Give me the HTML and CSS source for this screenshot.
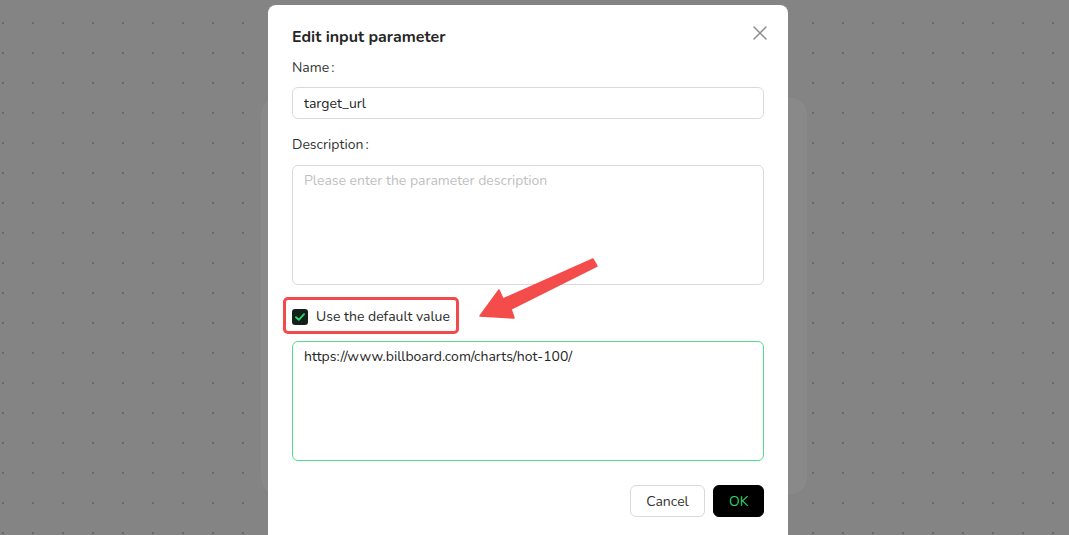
FILE: index.html
```html
<!DOCTYPE html>
<html lang="en">
<head>
<meta charset="utf-8">
<title>Edit input parameter</title>
<link rel="stylesheet" href="styles.css">
</head>
<body>
<div class="canvas">
  <div class="panel"></div>
</div>
<div class="modal">
  <div class="modal-head">
    <h2 class="title">Edit input parameter</h2>
    <button class="close" aria-label="Close">
      <svg width="14" height="14" viewBox="0 0 14 14"><path d="M1 1L13 13M13 1L1 13" stroke="#8c8c8c" stroke-width="1.5" stroke-linecap="round"/></svg>
    </button>
  </div>
  <div class="field">
    <label class="label">Name<span class="colon">:</span></label>
    <input class="input" type="text" value="target_url">
  </div>
  <div class="field">
    <label class="label">Description<span class="colon">:</span></label>
    <textarea class="textarea" placeholder="Please enter the parameter description"></textarea>
  </div>
  <div class="check-row">
    <span class="checkbox">
      <svg width="10" height="8" viewBox="0 0 10 8"><path d="M1 4.2L3.8 6.8L9 1.2" fill="none" stroke="#2bd66a" stroke-width="1.9" stroke-linecap="round" stroke-linejoin="round"/></svg>
    </span>
    <span class="check-label">Use the default value</span>
  </div>
  <textarea class="textarea textarea-active">https://www.billboard.com/charts/hot-100/</textarea>
  <div class="footer">
    <button class="btn btn-cancel">Cancel</button>
    <button class="btn btn-ok">OK</button>
  </div>
  <div class="highlight"></div>
</div>
<svg class="arrow" width="1069" height="535" viewBox="0 0 1069 535">
  <path d="M593 259 L597 266 L511 309 L514 318 L480 316 L499 290 L503 299 Z" fill="#f44b4b" stroke="#f44b4b" stroke-width="1.5" stroke-linejoin="round"/>
</svg>
</body>
</html>
```

FILE: styles.css
```css
* { box-sizing: border-box; }
html, body { margin: 0; padding: 0; }
body {
  width: 1069px;
  height: 535px;
  overflow: hidden;
  font-family: "Nunito", "Lato", "Noto Sans", sans-serif;
  background-color: #848484;
  background-image: radial-gradient(circle, #6a6a6a 0.9px, transparent 1.4px);
  background-size: 30px 30px;
  background-position: -12px 8px;
  position: relative;
}
.canvas {
  padding-top: 98px;
  padding-left: 261px;
}
.panel {
  width: 546px;
  height: 396px;
  border-radius: 16px;
  background: #898989;
}
.modal {
  position: absolute;
  left: 268px;
  top: 5px;
  width: 520px;
  height: 530px;
  overflow: hidden;
  background: #fff;
  border-radius: 8px 8px 0 0;
  padding: 20px 24px 0 24px;
  color: #2b2b2b;
}
.modal-head {
  display: flex;
  justify-content: space-between;
  align-items: center;
  height: 24px;
}
.title {
  margin: 0;
  font-size: 16px;
  font-weight: 700;
  line-height: 24px;
  color: #262626;
}
.close {
  border: 0;
  background: none;
  padding: 0;
  margin-right: -3px;
  margin-top: -8px;
  width: 14px;
  height: 14px;
  display: flex;
}
.field { display: flex; flex-direction: column; }
.label {
  margin-top: 8px;
  font-size: 14px;
  line-height: 22px;
  color: #333;
}
.colon { margin-left: 2px; }
.field + .field .label { margin-top: 15px; }
.input, .textarea {
  margin-top: 8px;
  width: 472px;
  border: 1px solid #d9d9d9;
  border-radius: 6px;
  font-family: inherit;
  font-size: 14px;
  color: #262626;
  padding: 0 11px;
  outline: none;
  background: #fff;
}
.input { height: 32px; line-height: 30px; }
.textarea {
  height: 120px;
  padding: 4px 11px;
  line-height: 22px;
  resize: none;
  display: block;
}
.field + .field .textarea { margin-top: 9px; }
.textarea::placeholder { color: #bfbfbf; }
.check-row {
  display: flex;
  align-items: center;
  gap: 8px;
  margin-top: 21px;
  height: 22px;
}
.checkbox {
  width: 16px;
  height: 16px;
  border-radius: 3px;
  background: #14201a;
  display: flex;
  align-items: center;
  justify-content: center;
}
.check-label { font-size: 14px; color: #2b2b2b; line-height: 22px; }
.textarea-active {
  margin-top: 13px;
  border-color: #55dc8c;
}
.footer {
  display: flex;
  justify-content: flex-end;
  gap: 8px;
  margin-top: 24px;
}
.btn {
  height: 32px;
  border-radius: 6px;
  font-family: inherit;
  font-size: 14px;
  padding: 0 15px;
  cursor: pointer;
}
.btn-cancel {
  width: 75px;
  background: #fff;
  border: 1px solid #d9d9d9;
  color: #333;
}
.btn-ok {
  width: 51px;
  background: #000;
  border: 1px solid #000;
  color: #2ed16c;
}
.highlight {
  position: absolute;
  left: 15px;
  top: 292px;
  width: 176px;
  height: 37px;
  border: 3px solid #f24a4a;
  border-radius: 5px;
}
.arrow {
  position: absolute;
  left: 0;
  top: 0;
  pointer-events: none;
}
```
